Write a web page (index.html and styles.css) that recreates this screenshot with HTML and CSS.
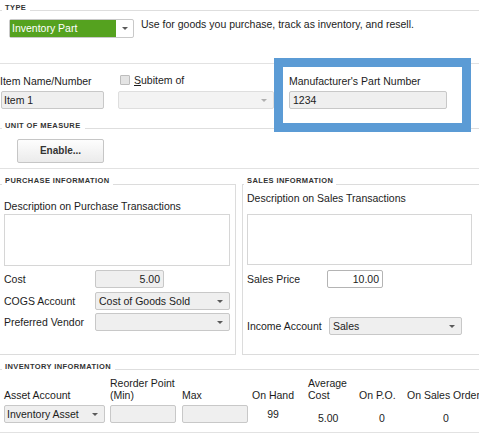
FILE: index.html
```html
<!DOCTYPE html>
<html>
<head>
<meta charset="utf-8">
<link rel="stylesheet" href="styles.css">
</head>
<body>
<div class="page">
  <section class="type-sec">
    <div class="title"><span class="dash"></span><span class="ttext">TYPE</span><span class="rule"></span></div>
    <div class="type-row">
      <div class="combo-type"><span class="green">Inventory Part</span><span class="arrbox"><i class="arr"></i></span></div>
      <div class="type-desc">Use for goods you purchase, track as inventory, and resell.</div>
    </div>
  </section>

  <section class="item-sec">
    <div class="f-name">
      <div class="lbl">Item Name/Number</div>
      <div class="input name-in">Item 1</div>
    </div>
    <div class="f-sub">
      <div class="lbl sub-lbl"><span class="cb"></span><span><u>S</u>ubitem of</span></div>
      <div class="select disabled"><i class="arr light"></i></div>
    </div>
    <div class="mpn">
      <div class="lbl">Manufacturer's Part Number</div>
      <div class="input mpn-in">1234</div>
    </div>
  </section>

  <section class="uom-sec">
    <div class="title"><span class="dash"></span><span class="ttext">UNIT OF MEASURE</span><span class="rule"></span></div>
    <div class="btn">Enable...</div>
  </section>

  <section class="info-sec">
    <fieldset class="grp purchase">
      <legend>PURCHASE INFORMATION</legend>
      <div class="desc-lbl p-desc">Description on Purchase Transactions</div>
      <div class="ta p-ta"></div>
      <div class="frow r-cost"><span class="flbl p-l">Cost</span><div class="input num cost-in">5.00</div></div>
      <div class="frow r-cogs"><span class="flbl p-l">COGS Account</span><div class="select p-sel"><span>Cost of Goods Sold</span><i class="arr"></i></div></div>
      <div class="frow r-vend"><span class="flbl p-l">Preferred Vendor</span><div class="select p-sel"><i class="arr"></i></div></div>
    </fieldset>
    <fieldset class="grp sales">
      <legend>SALES INFORMATION</legend>
      <div class="desc-lbl">Description on Sales Transactions</div>
      <div class="ta s-ta"></div>
      <div class="frow r-price"><span class="flbl s-l1">Sales Price</span><div class="input num white price-in">10.00</div></div>
      <div class="frow r-inc"><span class="flbl s-l2">Income Account</span><div class="select s-sel"><span>Sales</span><i class="arr"></i></div></div>
    </fieldset>
  </section>

  <section class="inv-sec">
    <div class="title"><span class="dash"></span><span class="ttext">INVENTORY INFORMATION</span><span class="rule"></span></div>
    <div class="inv-grid">
      <div class="col c-asset">
        <div class="hdr">Asset Account</div>
        <div class="select asset-sel"><span>Inventory Asset</span><i class="arr"></i></div>
      </div>
      <div class="col c-reorder">
        <div class="hdr">Reorder Point<br>(Min)</div>
        <div class="input"></div>
      </div>
      <div class="col c-max">
        <div class="hdr">Max</div>
        <div class="input"></div>
      </div>
      <div class="col c-hand">
        <div class="hdr">On Hand</div>
        <div class="val v-hand">99</div>
      </div>
      <div class="col c-avg">
        <div class="hdr">Average<br>Cost</div>
        <div class="val v-avg">5.00</div>
      </div>
      <div class="col c-po">
        <div class="hdr">On P.O.</div>
        <div class="val v-po">0</div>
      </div>
      <div class="col c-so">
        <div class="hdr">On Sales Order</div>
        <div class="val v-so">0</div>
      </div>
    </div>
  </section>
</div>
</body>
</html>
```

FILE: styles.css
```css
* { box-sizing: border-box; }
html, body { margin: 0; padding: 0; }
body {
  width: 479px;
  height: 441px;
  overflow: hidden;
  background: #ffffff;
  font-family: "Liberation Sans", Arial, sans-serif;
  font-size: 10.5px;
  line-height: 12px;
  color: #1c1c1c;
}
.page { width: 479px; }

/* section titles */
.title {
  display: flex;
  align-items: center;
  height: 10px;
  line-height: 10px;
  font-size: 7.5px;
  font-weight: bold;
  letter-spacing: 0.4px;
  color: #333;
}
.title .dash {
  width: 2px;
  height: 0;
  border-top: 1px solid #dedede;
  margin-top: 5px;
  margin-right: 3px;
}
.title .rule {
  flex: 1;
  height: 0;
  border-top: 1px solid #dedede;
  margin-top: 5px;
  margin-left: 4px;
}

/* generic fields */
.lbl { line-height: 12px; white-space: nowrap; }
.input {
  height: 18px;
  border: 1px solid #c8c8c8;
  border-radius: 2px;
  background: #efefef;
  padding: 0 3px;
  line-height: 16px;
  white-space: nowrap;
}
.input.num { text-align: right; }
.input.white { background: #ffffff; border-color: #b4b4b4; }
.select {
  height: 18px;
  border: 1px solid #c8c8c8;
  border-radius: 2px;
  background: #efefef;
  padding: 0 0 0 3px;
  display: flex;
  align-items: center;
  white-space: nowrap;
}
.select.disabled { background: #f3f3f3; border-color: #dedede; }
.arr {
  width: 0;
  height: 0;
  border-left: 3px solid transparent;
  border-right: 3px solid transparent;
  border-top: 3px solid #5a5a5a;
  margin-left: auto;
  margin-right: 6px;
}
.arr.light { border-top-color: #b0b0b0; }

/* TYPE */
.type-sec { height: 63px; padding-top: 3px; }
.type-row { display: flex; align-items: flex-start; margin-top: 5px; }
.combo-type {
  flex-shrink: 0;
  margin-left: 9px;
  margin-top: 1px;
  width: 125px;
  height: 19px;
  border: 1px solid #c9c9c9;
  border-radius: 2px;
  background: #fff;
  display: flex;
}
.combo-type .green {
  width: 106px;
  background: #55a21f;
  color: #fff;
  padding-left: 2px;
  line-height: 17px;
}
.combo-type .arrbox { flex: 1; display: flex; align-items: center; }
.combo-type .arr { margin-right: 5px; }
.type-desc { margin-left: 7px; white-space: nowrap; }

/* ITEM */
.item-sec {
  display: flex;
  align-items: flex-start;
  height: 58px;
  border-top: 1px solid #e2e2e2;
}
.item-sec > div { flex-shrink: 0; }
.f-name { margin-left: 1px; width: 103px; padding-top: 11px; }
.f-name .lbl { margin-left: -1px; margin-bottom: 4px; }
.name-in { padding-left: 2px; }
.f-sub { margin-left: 14px; width: 156px; padding-top: 10px; }
.sub-lbl { display: flex; align-items: center; margin-bottom: 5px; }
.cb {
  width: 10px;
  height: 10px;
  margin-left: 2px;
  margin-right: 4px;
  border: 1px solid #bdbdbd;
  border-radius: 1px;
  background: #e4e4e4;
}
.mpn {
  position: relative;
  z-index: 2;
  margin-top: -6px;
  width: 197px;
  height: 74px;
  border: 9px solid #5b9bd5;
  background: #fff;
  padding: 8px 6px;
}
.mpn .lbl { margin-bottom: 4px; }
.mpn-in { width: 158px; }

/* UOM */
.uom-sec { height: 47px; }
.btn {
  margin-top: 8px;
  margin-left: 17px;
  width: 87px;
  height: 24px;
  border: 1px solid #c6c6c6;
  border-radius: 2px;
  background: linear-gradient(#fdfdfd, #ebebeb);
  text-align: center;
  line-height: 22px;
  font-size: 10px;
  font-weight: bold;
  color: #333;
}

/* PURCHASE / SALES */
.info-sec {
  display: flex;
  border-top: 1px solid #e2e2e2;
  padding-top: 7px;
  height: 187px;
}
.grp {
  flex-shrink: 0;
  margin: 0;
  min-width: 0;
  height: 179px;
  border: 1px solid #dcdcdc;
  padding: 0 4px;
}
.grp legend {
  font-size: 7.5px;
  font-weight: bold;
  letter-spacing: 0.4px;
  color: #333;
  line-height: 10px;
  padding: 0 3px 6px 3px;
  white-space: nowrap;
}
.purchase { margin-left: -2px; width: 238px; padding-left: 5px; }
.purchase legend { margin-left: -2px; }
.sales { margin-left: 6px; width: 245px; }
.sales legend { margin-left: -3px; }
.desc-lbl { white-space: nowrap; }
.p-desc { margin-top: 8px; }
.ta { border: 1px solid #d6d6d6; background: #fff; }
.p-ta { margin-top: 2px; width: 226px; height: 52px; }
.s-ta { margin-top: 10px; width: 225px; height: 51px; }
.frow { display: flex; align-items: center; height: 18px; }
.frow > * { flex-shrink: 0; }
.flbl { white-space: nowrap; }
.p-l { width: 91px; }
.r-cost { margin-top: 4px; }
.r-cogs { margin-top: 4px; }
.r-vend { margin-top: 3px; }
.cost-in { width: 69px; }
.p-sel { width: 135px; }
.r-price { margin-top: 5px; }
.s-l1 { width: 80px; }
.price-in { width: 56px; }
.r-inc { margin-top: 29px; }
.s-l2 { width: 82px; }
.s-sel { width: 133px; }

/* INVENTORY */
.inv-sec {
  margin-top: 7px;
  padding-bottom: 9px;
  border-bottom: 1px solid #e2e2e2;
}
.inv-grid { display: flex; margin-top: 5px; }
.col { display: flex; flex-direction: column; flex-shrink: 0; }
.hdr {
  height: 24px;
  display: flex;
  align-items: flex-end;
  white-space: nowrap;
  margin-bottom: 4px;
}
.c-asset { margin-left: 4px; width: 101px; }
.asset-sel { padding-left: 2px; }
.c-reorder { margin-left: 5px; width: 66px; }
.c-max { margin-left: 6px; width: 66px; }
.c-hand { margin-left: 4px; width: 42px; }
.c-avg { margin-left: 14px; width: 40px; }
.c-po { margin-left: 11px; width: 36px; }
.c-so { margin-left: 12px; width: 80px; }
.val { height: 18px; line-height: 18px; }
.v-hand { text-align: center; }
.v-avg { padding-top: 4px; padding-left: 10px; }
.v-po { padding-top: 4px; padding-left: 20px; }
.v-so { padding-top: 4px; padding-left: 36px; }
```
